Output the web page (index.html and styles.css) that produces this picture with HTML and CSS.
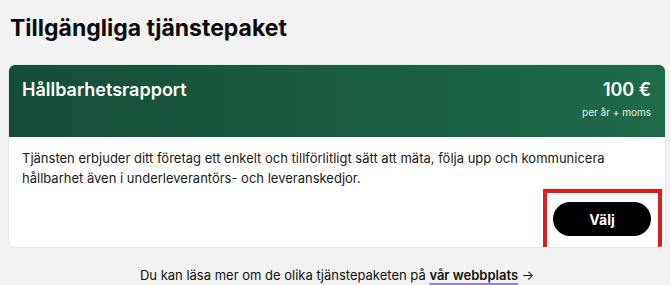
FILE: index.html
```html
<!DOCTYPE html>
<html lang="sv">
<head>
    <meta charset="UTF-8">
    <meta name="viewport" content="width=device-width, initial-scale=1.0">
    <title>Tillgängliga tjänstepaket</title>
    <link rel="stylesheet" href="styles.css">
</head>
<body>
    <main class="page">
        <h1 class="page-title">Tillgängliga tjänstepaket</h1>

        <section class="package">
            <div class="package-head">
                <h2 class="package-name">Hållbarhetsrapport</h2>
                <div class="package-price">
                    <span class="price">100 €</span>
                    <span class="price-note">per år + moms</span>
                </div>
            </div>
            <div class="package-body">
                <p>Tjänsten erbjuder ditt företag ett enkelt och tillförlitligt sätt att mäta, följa upp och kommunicera hållbarhet även i underleverantörs- och leveranskedjor.</p>
                <div class="package-actions">
                    <span class="highlight">
                        <button type="button" class="btn-choose">Välj</button>
                    </span>
                </div>
            </div>
        </section>

        <p class="more-info">Du kan läsa mer om de olika tjänstepaketen på <a href="#">vår webbplats</a> &rarr;</p>
    </main>
</body>
</html>
```

FILE: styles.css
```css
body {
    margin: 0;
    padding: 0;
    background-color: #f2f2f2;
    font-family: Inter, "Noto Sans", Arial, sans-serif;
    color: #111;
}

.page {
    padding: 14px 5px 0 9px;
}

.page-title {
    margin: 0 0 23px 1px;
    font-size: 23px;
    line-height: 28px;
    font-weight: 700;
    color: #0b0b0b;
}

.package {
    background-color: #fff;
    border-radius: 6px;
    overflow: hidden;
    box-shadow: 0 0 0 1px #e9e9e9;
}

.package-head {
    display: flex;
    justify-content: space-between;
    align-items: flex-start;
    padding: 11px 14px 17px 13px;
    background-image: linear-gradient(to right, #164d38, #1e6a4a);
    color: #fff;
}

.package-name {
    margin: 0;
    font-size: 18px;
    line-height: 28px;
    font-weight: 600;
}

.package-price {
    display: flex;
    flex-direction: column;
    align-items: flex-end;
}

.price {
    font-size: 18px;
    line-height: 28px;
    font-weight: 600;
}

.price-note {
    font-size: 10px;
    line-height: 16px;
    color: #e8f0ec;
}

.package-body {
    padding: 11px 14px 11px 13px;
}

.package-body p {
    margin: 0;
    max-width: 620px;
    font-size: 13px;
    line-height: 20px;
    color: #1a1a1a;
}

.package-actions {
    display: flex;
    justify-content: flex-end;
    margin-top: 14px;
}

.highlight {
    position: relative;
    display: inline-block;
}

/* annotation frame drawn over the button */
.highlight::after {
    content: "";
    position: absolute;
    top: -13px;
    right: -11px;
    bottom: -15px;
    left: -10px;
    border: 4px solid #e21c1c;
}

.btn-choose {
    display: block;
    width: 98px;
    height: 34px;
    border: none;
    border-radius: 17px;
    background-color: #000;
    color: #fff;
    font-family: inherit;
    font-size: 14px;
    font-weight: 700;
    cursor: pointer;
}

.more-info {
    margin: 18px 0 0;
    text-align: center;
    font-size: 13px;
    line-height: 20px;
    color: #111;
}

.more-info a {
    color: #111;
    font-weight: 600;
    text-decoration: underline;
    text-decoration-color: #8d80e8;
    text-decoration-thickness: 2px;
    text-underline-offset: 3px;
}
```
